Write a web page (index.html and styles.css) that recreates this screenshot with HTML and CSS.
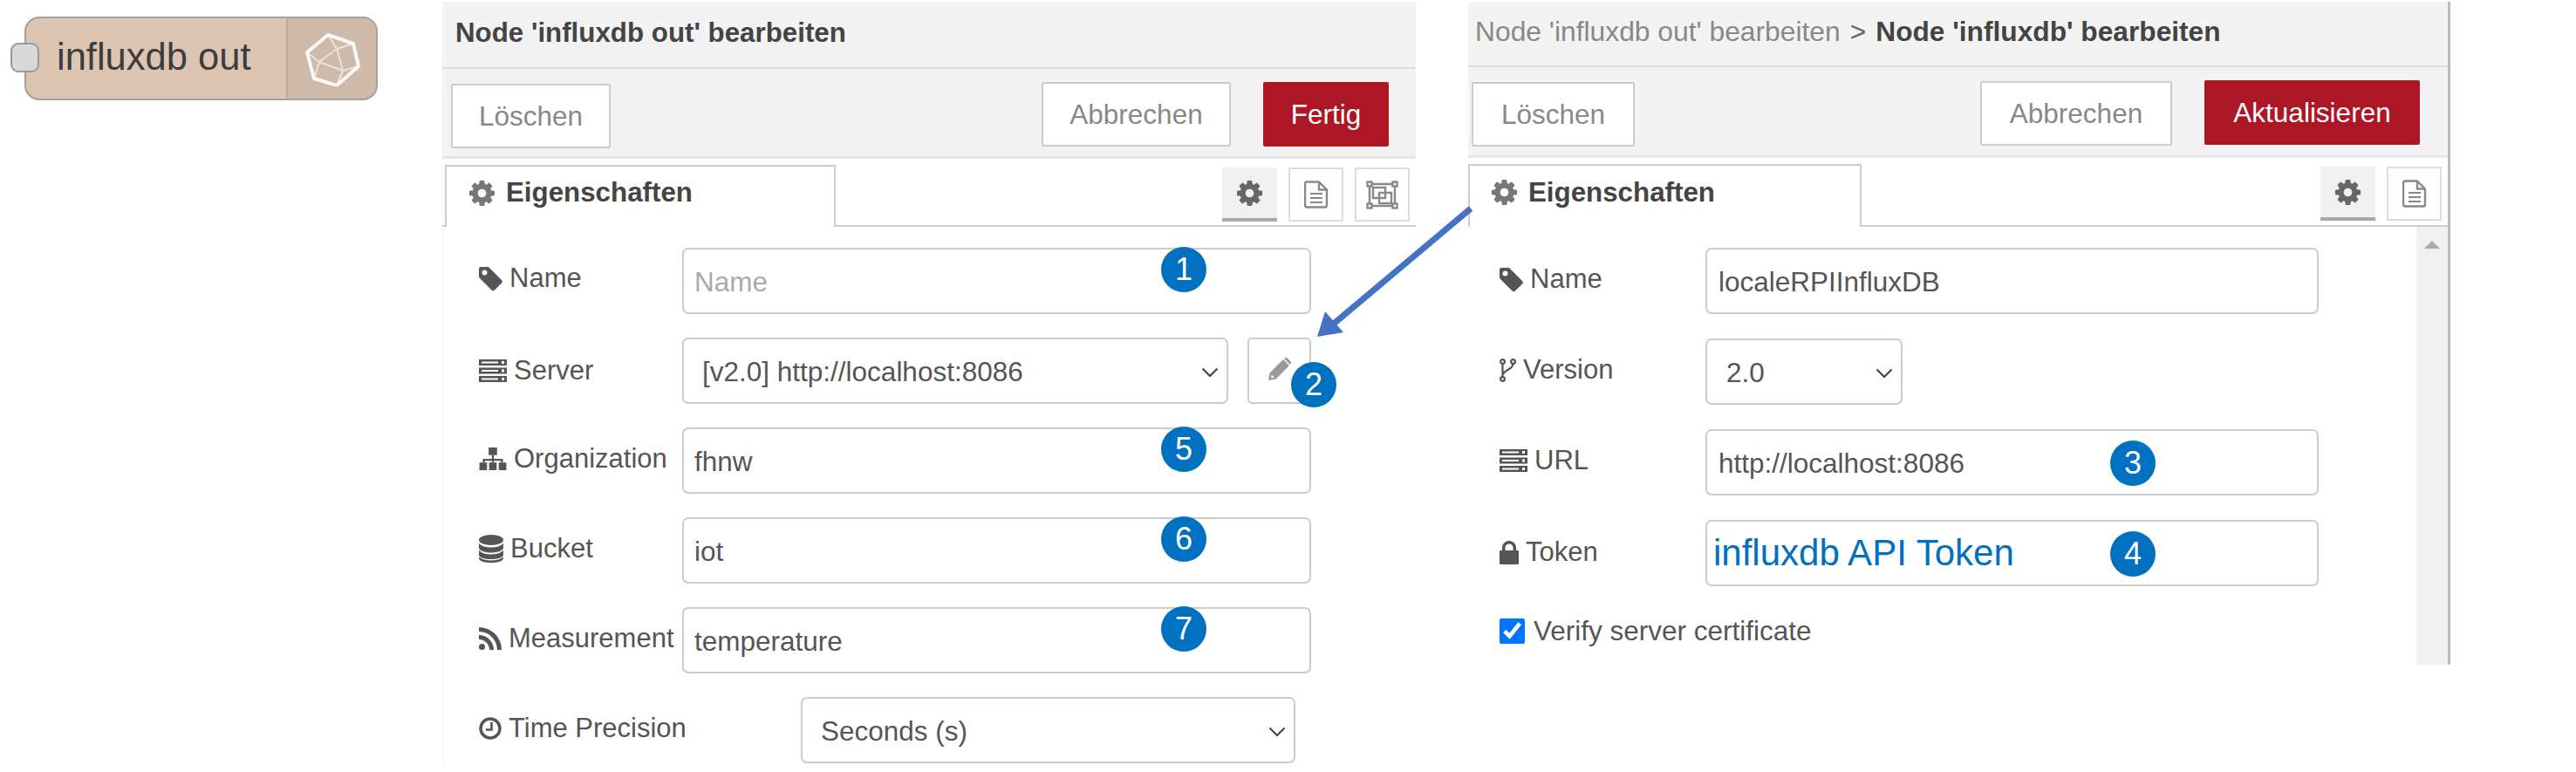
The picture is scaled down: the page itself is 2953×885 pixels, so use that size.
FILE: index.html
```html
<!DOCTYPE html>
<html lang="en">

<head>
  <meta charset="UTF-8">
  <title>influxdb out</title>
  <link rel="stylesheet" href="styles.css">
</head>

<body>

  <!-- shared icons -->
  <svg class="defs" xmlns="http://www.w3.org/2000/svg">
    <symbol id="i-cog" viewBox="0 0 1536 1536">
      <path fill-rule="evenodd" d="M1024 768q0-106-75-181t-181-75-181 75-75 181 75 181 181 75 181-75 75-181zm512-109v222q0 12-8 23t-20 13l-185 28q-19 54-39 91 35 50 107 138 10 12 10 25t-9 23q-27 37-99 108t-94 71q-12 0-26-9l-138-108q-44 23-91 38-16 136-29 186-7 28-36 28h-222q-14 0-24.500-8.500t-11.500-21.500l-28-184q-49-16-90-37l-141 107q-10 9-25 9-14 0-25-11-126-114-165-168-7-10-7-23 0-12 8-23 15-21 51-66.500t54-70.500q-27-50-41-99l-183-27q-13-2-21-12.500t-8-23.500v-222q0-12 8-23t19-13l186-28q14-46 39-92-40-57-107-138-10-12-10-24 0-10 9-23 26-36 98.500-107.500t94.500-71.500q13 0 26 10l138 107q44-23 91-38 16-136 29-186 7-28 36-28h222q14 0 24.500 8.500t11.500 21.500l28 184q49 16 90 37l142-107q9-9 24-9 13 0 25 10 129 119 165 170 7 8 7 22 0 12-8 23-15 21-51 66.500t-54 70.500q26 50 41 98l183 28q13 2 21 12.500t8 23.500z" />
    </symbol>
    <symbol id="i-doc" viewBox="0 0 28 32">
      <path fill="none" stroke="currentColor" stroke-width="2.400" stroke-linejoin="round" d="M3 1.500h14l9 9v18a2 2 0 0 1-2 2H3a2 2 0 0 1-2-2v-25a2 2 0 0 1 2-2zM17 1.500v9h9" />
      <path fill="none" stroke="currentColor" stroke-width="2.200" d="M7 15h14M7 20h14M7 25h14" />
    </symbol>
    <symbol id="i-expand" viewBox="0 0 37 33">
      <g fill="none" stroke="currentColor" stroke-width="2.400">
        <rect x="1.500" y="1.500" width="5" height="5" />
        <rect x="30.500" y="1.500" width="5" height="5" />
        <rect x="1.500" y="26.500" width="5" height="5" />
        <rect x="30.500" y="26.500" width="5" height="5" />
        <path d="M6.500 4h24M6.500 29h24M4 6.500v20M33 6.500v20" />
        <rect x="8" y="8" width="14" height="12" />
        <rect x="15" y="14" width="14" height="12" />
      </g>
    </symbol>
    <symbol id="i-tag" viewBox="0 0 27 27">
      <path fill-rule="evenodd" d="M2 0h9l15 15a2.500 2.500 0 0 1 0 3.500l-8 8a2.500 2.500 0 0 1-3.500 0L1 13a3 3 0 0 1-1-2V2a2 2 0 0 1 2-2zM6.500 3.500a3 3 0 1 0 0 6 3 3 0 0 0 0-6z" />
    </symbol>
    <symbol id="i-server" viewBox="0 0 32 26">
      <path fill-rule="evenodd" d="M0 0h32v7H0zM3 2.500v2h19v-2zM26 2v3h3V2zM0 9.500h32v7H0zM3 12v2h19v-2zM26 11.500v3h3v-3zM0 19h32v7H0zM3 21.500v2h19v-2zM26 21v3h3v-3z" />
    </symbol>
    <symbol id="i-sitemap" viewBox="0 0 32 27">
      <path d="M11 0h10v9h-10zM0 18h9v9H0zM11.500 18h9v9h-9zM23 18h9v9h-9z" />
      <path d="M14.800 9h2.400v4.500H28v4.500h-2.400v-2.200h-8.400V18h-2.400v-2.200H6.400V18H4v-4.500h10.800z" />
    </symbol>
    <symbol id="i-db" viewBox="0 0 28 32">
      <ellipse cx="14" cy="6" rx="14" ry="6" />
      <path d="M0 10c3 3 8 4.500 14 4.500s11-1.500 14-4.500v5c0 3-6 5.500-14 5.500S0 18 0 15zM0 18c3 3 8 4.500 14 4.500s11-1.500 14-4.500v5c0 3-6 5-14 5S0 26 0 23zM0 25.500c3 2.500 8 4 14 4s11-1.500 14-4V27c0 3-6 5-14 5S0 30 0 27z" />
    </symbol>
    <symbol id="i-rss" viewBox="0 0 26 26">
      <circle cx="3.500" cy="22.500" r="3.500" />
      <path d="M0 9v5a12 12 0 0 1 12 12h5A17 17 0 0 0 0 9zM0 0v5a21 21 0 0 1 21 21h5A26 26 0 0 0 0 0z" />
    </symbol>
    <symbol id="i-clock" viewBox="0 0 26 26">
      <circle cx="13" cy="13" r="11" fill="none" stroke="currentColor" stroke-width="3.500" />
      <path fill="none" stroke="currentColor" stroke-width="2.600" d="M14.500 6v8.500H8" />
    </symbol>
    <symbol id="i-fork" viewBox="0 0 19 27">
      <g fill="none" stroke="currentColor" stroke-width="2.200">
        <circle cx="3.500" cy="3.500" r="2.400" />
        <circle cx="15.500" cy="3.500" r="2.400" />
        <circle cx="3.500" cy="23.500" r="2.400" />
        <path d="M3.500 6v15M15.500 6c0 7-10 6-12 13" />
      </g>
    </symbol>
    <symbol id="i-lock" viewBox="0 0 22 27">
      <path fill-rule="evenodd" d="M1 11h2V8a8 8 0 0 1 16 0v3h2a1 1 0 0 1 1 1v14a1 1 0 0 1-1 1H1a1 1 0 0 1-1-1V12a1 1 0 0 1 1-1zM6.500 11h9V8a4.500 4.500 0 0 0-9 0z" />
    </symbol>
    <symbol id="i-pencil" viewBox="0 0 26 26">
      <path fill-rule="evenodd" d="M0 26l1.500-8.500L17 2l7 7L8.500 24.500zM3 22.500l1 1 3-.8-3.200-3.200z" />
      <path d="M18.500.8a2.500 2.500 0 0 1 3.500 0l3.200 3.200a2.500 2.500 0 0 1 0 3.500L25 8l-7-7z" />
    </symbol>
    <symbol id="i-chevron" viewBox="0 0 20 12">
      <path fill="none" stroke="currentColor" stroke-width="2.200" d="M1.500 1.500L10 10l8.500-8.500" />
    </symbol>
  </svg>

  <!-- Palette node -->
  <div class="node-col">
    <div class="node">
      <span class="port"></span>
      <span class="node-label">influxdb out</span>
      <span class="node-icon">
        <svg viewBox="0 0 64 64" width="64" height="64">
          <g fill="none" stroke="#fff" stroke-linejoin="round">
            <path stroke-width="4" opacity="0.9" d="M27 5L56 15L62 41L37 63L11 55L3 25Z" />
            <path stroke-width="2" opacity="0.6" d="M27 5L37 21L17 36L44 46L37 21L56 15M3 25L17 36L11 55M44 46L62 41M44 46L37 63M37 21L27 5" />
          </g>
        </svg>
      </span>
    </div>
  </div>

  <!-- Edit dialog of the output node -->
  <div class="dialog dialog-node">
    <div class="dialog-title"><b>Node 'influxdb out' bearbeiten</b></div>
    <div class="toolbar">
      <button type="button" class="btn btn-delete-low">Löschen</button>
      <button type="button" class="btn btn-cancel">Abbrechen</button>
      <button type="button" class="btn btn-primary btn-done">Fertig</button>
    </div>
    <div class="tabs">
      <div class="tab tab-node"><svg class="icon icon-cog"><use href="#i-cog" /></svg><span>Eigenschaften</span></div>
      <div class="side-buttons">
        <span class="side-btn side-active"><svg class="icon icon-cog"><use href="#i-cog" /></svg></span>
        <span class="side-btn"><svg class="icon icon-doc"><use href="#i-doc" /></svg></span>
        <span class="side-btn"><svg class="icon icon-expand"><use href="#i-expand" /></svg></span>
      </div>
    </div>
    <div class="form form-node">
      <div class="row">
        <label class="label label-high"><svg class="icon icon-tag"><use href="#i-tag" /></svg>Name</label>
        <div class="field">
          <input class="input" type="text" placeholder="Name">
          <span class="badge">1</span>
        </div>
      </div>
      <div class="row">
        <label class="label label-low"><svg class="icon icon-server"><use href="#i-server" /></svg>Server</label>
        <div class="field field-server">
          <select class="input select"><option>[v2.0] http://localhost:8086</option></select>
          <svg class="chevron"><use href="#i-chevron" /></svg>
        </div>
        <div class="pencil-btn">
          <svg class="icon icon-pencil"><use href="#i-pencil" /></svg>
          <span class="badge badge-two">2</span>
        </div>
      </div>
      <div class="row">
        <label class="label"><svg class="icon icon-server icon-sitemap"><use href="#i-sitemap" /></svg>Organization</label>
        <div class="field">
          <input class="input" type="text" value="fhnw">
          <span class="badge">5</span>
        </div>
      </div>
      <div class="row">
        <label class="label"><svg class="icon icon-db"><use href="#i-db" /></svg>Bucket</label>
        <div class="field">
          <input class="input" type="text" value="iot">
          <span class="badge">6</span>
        </div>
      </div>
      <div class="row">
        <label class="label"><svg class="icon icon-rss"><use href="#i-rss" /></svg>Measurement</label>
        <div class="field">
          <input class="input" type="text" value="temperature">
          <span class="badge">7</span>
        </div>
      </div>
      <div class="row">
        <label class="label label-wide"><svg class="icon icon-rss"><use href="#i-clock" /></svg>Time Precision</label>
        <div class="field field-precision">
          <select class="input select"><option>Seconds (s)</option></select>
          <svg class="chevron"><use href="#i-chevron" /></svg>
        </div>
      </div>
    </div>
  </div>

  <!-- Edit dialog of the config node -->
  <div class="dialog dialog-config">
    <div class="dialog-title title-config"><span class="crumb">Node 'influxdb out' bearbeiten</span><span class="crumb-sep">&gt;</span><b>Node 'influxdb' bearbeiten</b></div>
    <div class="toolbar toolbar-config">
      <button type="button" class="btn btn-delete">Löschen</button>
      <button type="button" class="btn btn-cancel btn-cancel-config">Abbrechen</button>
      <button type="button" class="btn btn-primary btn-update">Aktualisieren</button>
    </div>
    <div class="tabs tabs-config">
      <div class="tab tab-config"><svg class="icon icon-cog"><use href="#i-cog" /></svg><span>Eigenschaften</span></div>
      <div class="side-buttons">
        <span class="side-btn side-active"><svg class="icon icon-cog"><use href="#i-cog" /></svg></span>
        <span class="side-btn"><svg class="icon icon-doc"><use href="#i-doc" /></svg></span>
      </div>
    </div>
    <div class="config-body">
      <div class="form form-config">
        <div class="row row-config">
          <label class="label"><svg class="icon icon-tag"><use href="#i-tag" /></svg>Name</label>
          <div class="field"><input class="input" type="text" value="localeRPIInfluxDB"></div>
        </div>
        <div class="row row-config">
          <label class="label"><svg class="icon icon-fork"><use href="#i-fork" /></svg>Version</label>
          <div class="field field-version">
            <select class="input select"><option>2.0</option></select>
            <svg class="chevron"><use href="#i-chevron" /></svg>
          </div>
        </div>
        <div class="row row-config">
          <label class="label"><svg class="icon icon-server"><use href="#i-server" /></svg>URL</label>
          <div class="field">
            <input class="input" type="text" value="http://localhost:8086">
            <span class="badge badge-config">3</span>
          </div>
        </div>
        <div class="row row-config">
          <label class="label label-token"><svg class="icon icon-lock"><use href="#i-lock" /></svg>Token</label>
          <div class="field">
            <input class="input input-token" type="text" value="influxdb API Token">
            <span class="badge badge-config">4</span>
          </div>
        </div>
        <label class="verify"><input class="check" type="checkbox" checked>Verify server certificate</label>
      </div>
      <div class="scrollbar"><span class="scroll-up"></span></div>
    </div>
  </div>

  <!-- Arrow from the config dialog to the edit button -->
  <svg class="arrow" viewBox="0 0 190 170" width="190" height="170">
    <path fill="none" stroke="#4472c4" stroke-width="7" d="M181 6L24 138" />
    <path fill="#4472c4" d="M5 153L14 124L35 148Z" />
  </svg>

</body>

</html>
```

FILE: styles.css
```css
body {
  margin: 0;
  width: 2953px;
  height: 885px;
  overflow: hidden;
  position: relative;
  display: flex;
  align-items: flex-start;
  background-color: white;
  color: #555;
  font-family: "Liberation Sans", Arial, sans-serif;
  font-size: 31px;
}

.defs {
  display: none;
}

.icon {
  fill: currentColor;
  flex-shrink: 0;
}

/* palette node */
.node-col {
  width: 507px;
  flex-shrink: 0;
  padding: 19px 0 0 28px;
  box-sizing: border-box;
}

.node {
  position: relative;
  width: 405px;
  height: 96px;
  box-sizing: border-box;
  display: flex;
  background-color: #dcc5b2;
  border: 2px solid #a3a09d;
  border-radius: 17px;
  overflow: visible;
}

.port {
  position: absolute;
  left: -18px;
  top: 28px;
  width: 33px;
  height: 34px;
  box-sizing: border-box;
  background-color: #d9d9d9;
  border: 2px solid #999;
  border-radius: 9px;
}

.node-label {
  flex: 1;
  padding: 0 0 4px 35px;
  display: flex;
  align-items: center;
  font-size: 43.500px;
  color: #3d3d3d;
}

.node-icon {
  width: 101px;
  display: flex;
  align-items: center;
  justify-content: center;
  background-color: #cfb9a9;
  border-left: 2px solid #bfab9c;
  border-radius: 0 15px 15px 0;
}

/* dialogs */
.dialog {
  flex-shrink: 0;
  margin-top: 2px;
  box-sizing: border-box;
}

.dialog-node {
  width: 1116px;
}

.dialog-config {
  width: 1126px;
  margin-left: 60px;
  height: 760px;
  display: flex;
  flex-direction: column;
  border-right: 3px solid #bbb;
}

.dialog-title {
  height: 75px;
  box-sizing: border-box;
  padding: 0 0 4px 15px;
  display: flex;
  align-items: center;
  background-color: #f3f3f3;
  border-bottom: 2px solid #ddd;
  color: #444;
  font-size: 31.300px;
  white-space: pre;
}

.dialog-node .dialog-title {
  height: 77px;
}

.title-config {
  padding-left: 8px;
  font-size: 31.700px;
}

.crumb {
  color: #888;
  font-size: 31.800px;
}

.crumb-sep {
  margin: 0 11px;
  color: #666;
}

.toolbar {
  height: 103px;
  box-sizing: border-box;
  display: flex;
  align-items: flex-start;
  padding: 15px 31px 0 10px;
  background-color: #f3f3f3;
  border-bottom: 3px solid #e6e6e6;
}

.toolbar-config {
  height: 104px;
  padding: 15px 32px 0 4px;
}

.btn {
  height: 74px;
  padding: 0;
  box-sizing: border-box;
  background-color: white;
  border: 2px solid #ccc;
  border-radius: 2px;
  color: #888;
  font-family: inherit;
  font-size: 31.500px;
}

.btn-delete-low {
  width: 183px;
  margin-top: 2px;
}

.btn-delete {
  width: 187px;
  margin-top: 2px;
}

.btn-cancel {
  width: 217px;
  margin-left: auto;
}

.btn-cancel-config {
  width: 220px;
  margin-top: 1px;
}

.btn-primary {
  margin-left: 37px;
  background-color: #ad1625;
  border-color: #ad1625;
  color: white;
}

.btn-done {
  width: 144px;
}

.btn-update {
  width: 247px;
}

/* tabs */
.tabs {
  height: 78px;
  box-sizing: border-box;
  display: flex;
  align-items: flex-start;
  padding: 7px 7px 0 3px;
  border-bottom: 2px solid #ccc;
}

.tabs-config {
  height: 79px;
  padding: 7px 7px 0 0;
}

.tab {
  height: 71px;
  box-sizing: border-box;
  display: flex;
  align-items: center;
  padding-bottom: 9px;
  background-color: white;
  border: 2px solid #ccc;
  border-bottom: none;
  color: #444;
  font-weight: bold;
  font-size: 31.300px;
}

.tab-node {
  width: 448px;
  padding-left: 26px;
}

.tab-config {
  width: 451px;
  height: 72px;
  padding-left: 25px;
}

.tab .icon-cog {
  margin-right: 13px;
  color: #777;
}

.icon-cog {
  width: 29px;
  height: 29px;
}

.side-buttons {
  margin-left: auto;
  margin-top: 3px;
  display: flex;
  gap: 13px;
}

.side-btn {
  width: 63px;
  height: 62px;
  box-sizing: border-box;
  display: flex;
  align-items: center;
  justify-content: center;
  border: 2px solid #ddd;
  color: #888;
}

.side-active {
  background-color: #f0f0f0;
  border: none;
  border-bottom: 4px solid #aaa;
  color: #666;
}

.icon-doc {
  width: 28px;
  height: 32px;
}

.icon-expand {
  width: 37px;
  height: 33px;
}

/* forms */
.form-node {
  padding: 24px 120px 0 41px;
  border-left: 1px solid #f3f3f3;
}

.row {
  height: 76px;
  margin-bottom: 27px;
  display: flex;
  align-items: center;
}

.row-config {
  margin-bottom: 28px;
}

.label {
  width: 233px;
  flex-shrink: 0;
  padding-bottom: 4px;
  display: flex;
  align-items: center;
  white-space: nowrap;
}

.label-high {
  padding-bottom: 6px;
}

.label-low {
  padding-bottom: 0;
}

.label-wide {
  width: 369px;
}

.form-config .label-token {
  padding-bottom: 2px;
}

.label .icon {
  margin-right: 8px;
  color: #555;
}

.icon-tag {
  width: 27px;
  height: 27px;
}

.icon-server {
  width: 32px;
  height: 26px;
}

.icon-db {
  width: 28px;
  height: 32px;
}

.icon-rss {
  width: 26px;
  height: 26px;
}

.icon-fork {
  width: 19px;
  height: 27px;
}

.icon-lock {
  width: 22px;
  height: 27px;
}

.icon-pencil {
  width: 26px;
  height: 26px;
  margin-bottom: 4px;
  color: #999;
}

.field {
  position: relative;
  flex: 1;
  height: 100%;
}

.field-server {
  flex: none;
  width: 626px;
}

.field-precision {
  flex: none;
  width: 567px;
}

.field-version {
  flex: none;
  width: 226px;
}

.input {
  width: 100%;
  height: 100%;
  padding: 2px 0 0 12px;
  box-sizing: border-box;
  background-color: white;
  border: 2px solid #ccc;
  border-radius: 7px;
  color: #555;
  font-family: inherit;
  font-size: 31.500px;
}

.form-config .input {
  padding-left: 13px;
}

.input::placeholder {
  color: #aaa;
}

.form-node .select {
  appearance: none;
  padding-left: 21px;
}

.form-config .select {
  appearance: none;
  padding-left: 22px;
}

.form-config .input-token {
  padding: 0 0 0 7px;
  color: #0070c0;
  font-size: 42px;
}

.chevron {
  position: absolute;
  right: 11px;
  top: 34px;
  width: 20px;
  height: 12px;
  color: #444;
}

.pencil-btn {
  position: relative;
  margin-left: 22px;
  width: 74px;
  height: 100%;
  box-sizing: border-box;
  display: flex;
  align-items: center;
  justify-content: center;
  border: 2px solid #ccc;
  border-radius: 5px;
}

.badge {
  position: absolute;
  left: 549px;
  top: -1px;
  width: 52px;
  height: 52px;
  display: flex;
  align-items: center;
  justify-content: center;
  background-color: #0070c0;
  border-radius: 50%;
  color: white;
  font-size: 36px;
}

.badge-two {
  left: 48px;
  top: 26px;
}

.badge-config {
  left: 464px;
  top: 13px;
}

/* config dialog body */
.config-body {
  flex: 1;
  display: flex;
}

.form-config {
  flex: 1;
  padding: 24px 112px 0 36px;
}

.form-config .label {
  width: 236px;
}

.verify {
  display: flex;
  align-items: center;
  margin-top: 33px;
  font-size: 31.500px;
}

.check {
  width: 29px;
  height: 29px;
  margin: 0 10px 0 0;
}

.scrollbar {
  width: 36px;
  display: flex;
  justify-content: center;
  padding-top: 16px;
  box-sizing: border-box;
  background-color: #f0f0f0;
}

.scroll-up {
  width: 0;
  height: 0;
  border-left: 9px solid transparent;
  border-right: 9px solid transparent;
  border-bottom: 9px solid #aaa;
}

/* free overlay between the two dialogs */
.arrow {
  position: absolute;
  left: 1505px;
  top: 233px;
}
```
